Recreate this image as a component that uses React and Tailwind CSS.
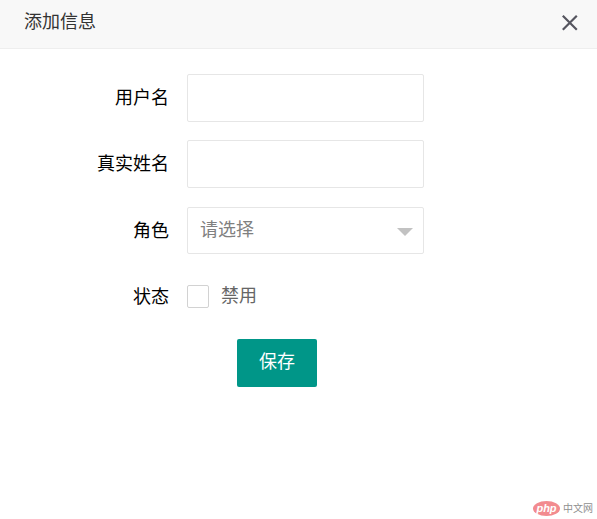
import { useState } from "react";

const font = "font-['Liberation_Sans','Noto_Sans_CJK_SC',sans-serif]";

function Row({ label, children, className }) {
  return (
    <div className={`flex items-center ${className}`}>
      <label className="relative left-[1px] w-[168px] text-right text-[18px] leading-[24px] text-black">{label}</label>
      <div className="ml-[19px]">{children}</div>
    </div>
  );
}

export default function App() {
  const [name, setName] = useState("");
  const [realName, setRealName] = useState("");

  return (
    <div className={`relative h-[519px] w-[597px] overflow-hidden bg-white ${font}`}>
      {/* HEADER */}
      <div className="flex h-[49px] items-center justify-between border-b border-[#eeeeee] bg-[#f8f8f8] pl-[24px] pr-[17px]">
        <h1 className="mb-[5px] text-[18px] leading-[24px] font-normal text-[#333333]">添加信息</h1>
        <svg width="20" height="20" viewBox="0 0 20 20" className="mt-[-3px] text-[#55555f]">
          <path d="M2.8 2.8 L16.8 16.8 M16.8 2.8 L2.8 16.8" stroke="currentColor" strokeWidth="2.2" fill="none" />
        </svg>
      </div>

      {/* FORM */}
      <form className="pt-[25px]">
        <Row label="用户名" className="mb-[18px]">
          <input
            className="block h-[48px] w-[237px] rounded-[2px] border border-[#e6e6e6] bg-white px-[13px] text-[18px] outline-none"
            value={name}
            onChange={(e) => setName(e.target.value)}
          />
        </Row>
        <Row label="真实姓名" className="mb-[19px]">
          <input
            className="block h-[48px] w-[237px] rounded-[2px] border border-[#e6e6e6] bg-white px-[13px] text-[18px] outline-none"
            value={realName}
            onChange={(e) => setRealName(e.target.value)}
          />
        </Row>
        <Row label="角色" className="mb-[30px]">
          <div className="flex h-[47px] w-[237px] items-center justify-between rounded-[2px] border border-[#e6e6e6] bg-white pl-[12px] pr-[10px]">
            <span className="mb-[1px] text-[18px] leading-[24px] text-[#808080]">请选择</span>
            <span className="mt-[2px] h-0 w-0 border-x-[8px] border-t-[8px] border-x-transparent border-t-[#c2c2c2]" />
          </div>
        </Row>
        <Row label="状态" className="mb-[30px]">
          <div className="flex items-center">
            <span className="h-[23px] w-[22px] rounded-[2px] border border-[#d2d2d2] bg-white" />
            <span className="mb-[1px] ml-[12px] text-[18px] leading-[24px] text-[#666666]">禁用</span>
          </div>
        </Row>
        <div className="pl-[237px]">
          <button
            type="button"
            className="block h-[48px] w-[80px] rounded-[2px] bg-[#009688] pb-[2px] text-[18px] text-white"
          >
            保存
          </button>
        </div>
      </form>

      {/* WATERMARK */}
      <div className="absolute left-[533px] top-[501px] flex items-center">
        <span className="flex h-[15px] w-[27px] items-center justify-center rounded-[50%] bg-[#f28b8f] text-[11px] leading-none font-bold italic text-white">
          php
        </span>
        <span className="ml-[3px] text-[10px] leading-none text-[#8f8f8f]">中文网</span>
      </div>
    </div>
  );
}
